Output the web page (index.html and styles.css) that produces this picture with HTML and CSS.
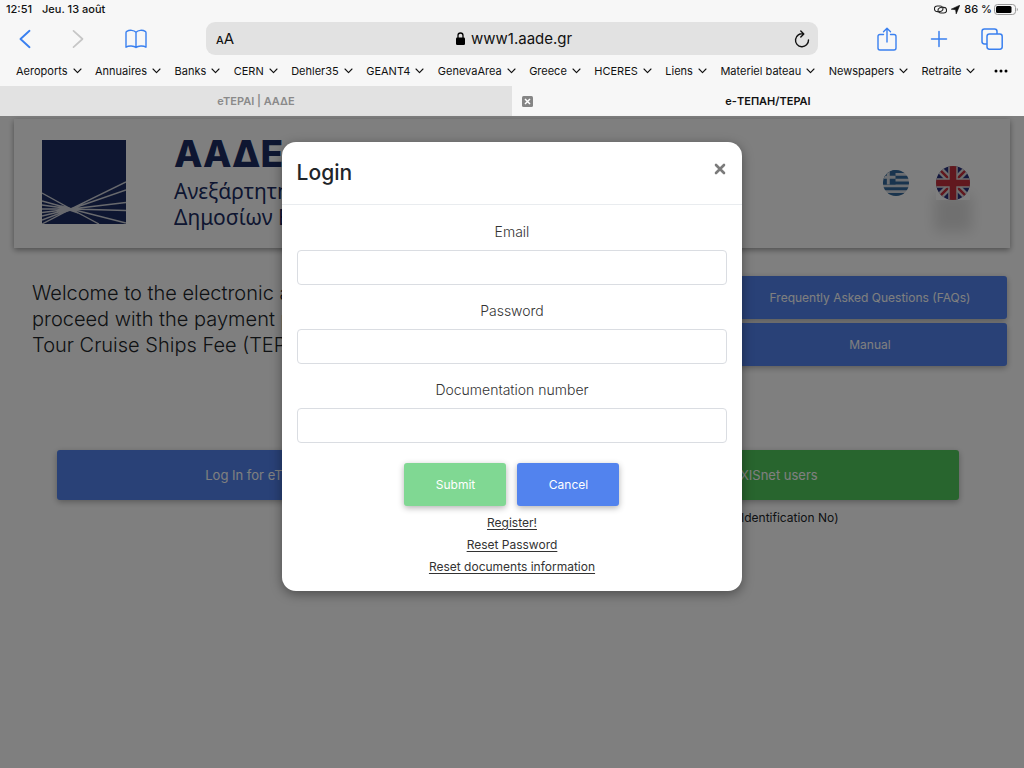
FILE: index.html
```html
<!DOCTYPE html>
<html lang="en">
<head>
<meta charset="utf-8">
<meta name="viewport" content="width=device-width, initial-scale=1">
<title>e-ΤΕΠΑΗ/TEPAI</title>
<link rel="stylesheet" href="styles.css">
</head>
<body>
<svg class="sprite" aria-hidden="true">
  <symbol id="chev" viewBox="0 0 9 6"><path d="M1 1 4.500 4.600 8 1" fill="none" stroke="currentColor" stroke-width="1.100" stroke-linecap="round" stroke-linejoin="round"/></symbol>
</svg>
<header class="browser">
  <div class="status">
    <span>12:51</span><span class="date">Jeu. 13 août</span>
    <span class="status-right">
      <svg width="13" height="9" viewBox="0 0 13 9" fill="none" stroke="#222" stroke-width="1.100" stroke-linecap="round"><path d="M4 6.600H3.200a2.700 2.700 0 0 1 0-5.600h3a2.700 2.700 0 0 1 1.600 4.900Q7 6.600 5.600 6.400M9 2.400h.8a2.700 2.700 0 0 1 0 5.600h-3a2.700 2.700 0 0 1-1.600-4.900Q6 2.400 7.400 2.600"/></svg>
      <svg width="9" height="9" viewBox="0 0 9 9"><path d="M8.800.2 5.200 8.900 4.600 4.700.2 4.200z" fill="#111" stroke="#111" stroke-width=".6" stroke-linejoin="round"/></svg>
      <span>86 %</span>
      <svg width="24" height="11" viewBox="0 0 24 11"><rect x=".5" y=".5" width="21" height="10" rx="3" fill="none" stroke="#999"/><rect x="2" y="2" width="15.500" height="7" rx="1.500" fill="#000"/><path d="M22.800 3.800q1 .4 1 1.700t-1 1.700z" fill="#999"/></svg>
    </span>
  </div>
  <div class="toolbar">
    <div class="tools tools-left">
      <button aria-label="Back"><svg width="12" height="20" viewBox="0 0 12 20" fill="none" stroke="#3a80f0" stroke-width="1.900" stroke-linecap="round" stroke-linejoin="round"><path d="M10.500 1.800 1.500 10l9 8.200"/></svg></button>
      <button aria-label="Forward"><svg width="12" height="20" viewBox="0 0 12 20" fill="none" stroke="#c6c6c6" stroke-width="1.700" stroke-linecap="round" stroke-linejoin="round"><path d="m1.500 1.800 9 8.200-9 8.200"/></svg></button>
      <button aria-label="Bookmarks"><svg width="22" height="20" viewBox="0 0 22 20" fill="none" stroke="#3a80f0" stroke-width="1.400" stroke-linejoin="round"><path d="M11 3.200C9 1 4.500.7 1.800 2.300q-.8.500-.8 1.400v14.500c2.500-1.800 8-1.600 10 .4 2-2 7.500-2.200 10-.4V3.700q0-.9-.8-1.400C17.500.7 13 1 11 3.200zv15.400M11 3.200v15.400"/></svg></button>
    </div>
    <div class="address">
      <button class="reader" aria-label="Text size"><span class="small-a">A</span>A</button>
      <div class="url"><svg width="9" height="13" viewBox="0 0 9 13"><rect y="5.500" width="9" height="7.500" rx="1.200"/><path d="M2 6V3.500a2.500 2.500 0 0 1 5 0V6" fill="none" stroke="#000" stroke-width="1.300"/></svg><span>www1.aade.gr</span></div>
      <button aria-label="Reload"><svg width="16" height="18" viewBox="0 0 16 18" fill="none" stroke="#111" stroke-width="1.400" stroke-linecap="round" stroke-linejoin="round"><path d="M9.500 3.900A6.500 6.500 0 1 0 14.500 10M6.800 1l3 3-3 3"/></svg></button>
    </div>
    <div class="tools tools-right">
      <button aria-label="Share"><svg width="20" height="24" viewBox="0 0 20 24" fill="none" stroke="#3a80f0" stroke-width="1.400" stroke-linecap="round" stroke-linejoin="round"><path d="M6.500 7.500H3q-2 0-2 2V21q0 2 2 2h14q2 0 2-2V9.500q0-2-2-2h-3.500M10 15V1.500M6.500 4.800 10 1.300l3.500 3.500"/></svg></button>
      <button aria-label="New tab"><svg width="18" height="18" viewBox="0 0 18 18" stroke="#3a80f0" stroke-width="1.500" stroke-linecap="round"><path d="M9 1.500v15M1.500 9h15"/></svg></button>
      <button aria-label="Tabs"><svg width="22" height="22" viewBox="0 0 22 22" fill="none" stroke="#3a80f0" stroke-width="1.500"><rect x="6" y="6" width="15.200" height="15.200" rx="2.400"/><path d="M6 16H3.400Q1 16 1 13.600V3.400Q1 1 3.400 1h10.200Q16 1 16 3.400V6"/></svg></button>
    </div>
  </div>
  <nav class="favorites" aria-label="Favorites">
    <button>Aeroports<svg><use href="#chev"/></svg></button>
    <button>Annuaires<svg><use href="#chev"/></svg></button>
    <button>Banks<svg><use href="#chev"/></svg></button>
    <button>CERN<svg><use href="#chev"/></svg></button>
    <button>Dehler35<svg><use href="#chev"/></svg></button>
    <button>GEANT4<svg><use href="#chev"/></svg></button>
    <button>GenevaArea<svg><use href="#chev"/></svg></button>
    <button>Greece<svg><use href="#chev"/></svg></button>
    <button>HCERES<svg><use href="#chev"/></svg></button>
    <button>Liens<svg><use href="#chev"/></svg></button>
    <button>Materiel bateau<svg><use href="#chev"/></svg></button>
    <button>Newspapers<svg><use href="#chev"/></svg></button>
    <button>Retraite<svg><use href="#chev"/></svg></button>
    <button class="more" aria-label="More"><svg viewBox="0 0 14 4"><circle cx="2" cy="2" r="1.500"/><circle cx="7" cy="2" r="1.500"/><circle cx="12" cy="2" r="1.500"/></svg></button>
  </nav>
  <div class="tabs">
    <div class="tab"><span>eTEPAI | ΑΑΔΕ</span></div>
    <div class="tab tab-active">
      <button class="tab-close" aria-label="Close tab"><svg width="11" height="11" viewBox="0 0 11 11"><rect width="11" height="11" rx="1.500" fill="#858585"/><path d="m3 3 5 5m0-5-5 5" stroke="#fff" stroke-width="1.500"/></svg></button>
      <span>e-ΤΕΠΑΗ/TEPAI</span>
    </div>
  </div>
</header>

<div class="page">
  <header class="site-header">
    <svg class="logo" viewBox="0 0 84 84" role="img" aria-label="ΑΑΔΕ"><rect width="84" height="84" fill="#1c2d62"/><path d="M0 53 29 69 84 42M29 69 84 50M29 69 84 62.500M29 69 84 70.500M29 69 84 83M29 69 57 84M29 69 0 84M29 69 0 61M29 69H0M29 69 0 76M29 69 0 65M29 69 0 72.500M29 69 0 80" fill="none" stroke="#d0d2da" stroke-width="1.400"/><path d="m18 65 11 3 9-2-6 4 5 4-9-3-10 3 7-5z" fill="#d0d2da"/></svg>
    <div class="brand">
      <strong>ΑΑΔΕ</strong>
      <span>Ανεξάρτητη<br>Δημοσίων Εσόδων</span>
    </div>
    <div class="languages">
      <button class="flag-gr" aria-label="Ελληνικά"><svg width="26" height="26" viewBox="0 0 27 27"><clipPath id="gr"><circle cx="13.500" cy="13.500" r="13.500"/></clipPath><g clip-path="url(#gr)"><path d="M0 0h27v27H0z" fill="#d8dde2"/><path d="M0 1.500h27M0 7.500h27M0 13.500h27M0 19.500h27M0 25.500h27" stroke="#33699c" stroke-width="3"/><path d="M0 0h13v15H0z" fill="#33699c"/><path d="M5.500 0v15M0 7.500h13" stroke="#d8dde2" stroke-width="3"/></g></svg></button>
      <button class="flag-uk" aria-label="English"><svg width="34" height="34" viewBox="0 0 34 34"><clipPath id="uk"><circle cx="17" cy="17" r="17"/></clipPath><g clip-path="url(#uk)"><path d="M0 0h34v34H0z" fill="#28307c"/><path d="m0 0 34 34M34 0 0 34" stroke="#ddd" stroke-width="7"/><path d="m0 0 34 34M34 0 0 34" stroke="#c2303c" stroke-width="2.600"/><path d="M17 0v34M0 17h34" stroke="#ddd" stroke-width="9.500"/><path d="M17 0v34M0 17h34" stroke="#c2303c" stroke-width="6.600"/></g></svg></button>
    </div>
  </header>

  <main>
    <section class="intro">
      <p class="welcome">Welcome to the electronic application to<br>proceed with the payment process of the<br>Tour Cruise Ships Fee (TEPAI)</p>
      <div class="help">
        <button class="btn">Frequently Asked Questions (FAQs)</button>
        <button class="btn">Manual</button>
      </div>
    </section>
    <section class="logins">
      <div><button class="btn btn-wide">Log In for eTEPAI users</button></div>
      <div>
        <button class="btn btn-wide btn-green">Log In for TAXISnet users</button>
        <p class="note">(Holders of Tax Identification No)</p>
      </div>
    </section>
  </main>

  <div class="overlay">
    <form class="dialog" role="dialog" aria-labelledby="login-title">
      <div class="dialog-head">
        <h1 id="login-title">Login</h1>
        <button type="button" class="close" aria-label="Close"><svg width="12" height="12" viewBox="0 0 12 12"><path d="m2 2 8 8m0-8-8 8" stroke="#7b7b7b" stroke-width="2.600" stroke-linecap="round"/></svg></button>
      </div>
      <div class="dialog-body">
        <div class="field"><label for="email">Email</label><input id="email" type="email"></div>
        <div class="field"><label for="password">Password</label><input id="password" type="password"></div>
        <div class="field"><label for="docnum">Documentation number</label><input id="docnum" type="text"></div>
        <div class="actions">
          <button type="submit" class="btn btn-submit">Submit</button>
          <button type="button" class="btn">Cancel</button>
        </div>
        <div class="links">
          <a href="#">Register!</a>
          <a href="#">Reset Password</a>
          <a href="#">Reset documents information</a>
        </div>
      </div>
    </form>
  </div>
</div>
</body>
</html>
```

FILE: styles.css
```css
* { box-sizing: border-box; }

body {
  margin: 0;
  min-height: 100vh;
  display: flex;
  flex-direction: column;
  background: #fff;
  color: #212529;
  font-family: Inter, "Open Sans", "Liberation Sans", sans-serif;
}

button {
  margin: 0;
  padding: 0;
  border: 0;
  background: none;
  color: inherit;
  font: inherit;
  cursor: pointer;
}

svg { display: block; }
.sprite { display: none; }
p, h1 { margin: 0; }

/* Browser */
.browser { background: #f7f7f7; color: #111; }

.status {
  display: flex;
  align-items: center;
  height: 18px;
  padding: 0 6px;
  font-size: 11px;
  font-weight: 500;
}
.date { margin-left: 10px; }
.status-right {
  display: flex;
  align-items: center;
  gap: 4px;
  margin-left: auto;
}
.status-right span { margin-right: -2px; }

.toolbar { display: flex; align-items: center; height: 41px; }
.tools { display: flex; align-items: center; width: 206px; }
.tools-left { padding-left: 19px; gap: 41px; }
.tools-right { padding-left: 59px; gap: 33px; }

.address {
  flex: 1;
  display: flex;
  align-items: center;
  justify-content: space-between;
  height: 33px;
  padding: 0 8px 0 10px;
  border-radius: 9px;
  background: #e2e2e2;
  font-size: 15px;
}
.small-a { font-size: 11px; font-weight: 500; }
.url { display: flex; align-items: center; gap: 6px; }

.favorites {
  display: flex;
  align-items: center;
  justify-content: space-between;
  height: 27px;
  padding: 0 16px 3px;
  font-size: 11px;
}
.favorites button { display: flex; align-items: center; gap: 5px; white-space: nowrap; }
.favorites svg { width: 9px; height: 6px; }
.favorites .more { margin-left: 5px; }
.favorites .more svg { width: 14px; height: 4px; }

.tabs { display: grid; grid-template-columns: 1fr 1fr; height: 30px; font-size: 11px; font-weight: 600; }
.tab {
  display: flex;
  align-items: center;
  justify-content: center;
  background: #e2e2e2;
  color: #8a8a8a;
}
.tab-active { position: relative; background: #f7f7f7; color: #111; }
.tab-close { position: absolute; left: 10px; }

/* Site */
.page { position: relative; flex: 1; padding: 3px 14px 0; }

.site-header {
  display: flex;
  align-items: flex-start;
  padding: 21px 40px 18px 28px;
  background: #fff;
  box-shadow: 0 2px 6px rgba(0, 0, 0, .4);
}
.logo { width: 84px; height: 84px; }
.brand { display: flex; flex-direction: column; margin-left: 48px; color: #1c2d62; white-space: nowrap; }
.brand strong { font-size: 37px; line-height: 28px; font-weight: 800; }
.brand span { margin-top: 10px; font-family: "Noto Sans", sans-serif; font-size: 21px; line-height: 26px; }
.languages { display: flex; align-items: center; gap: 27px; margin: 26px 0 0 auto; }
.flag-uk { box-shadow: 0 30px 14px 2px rgba(0, 0, 0, .12); }

.intro { display: grid; grid-template-columns: 1fr 274px; padding: 28px 3px 0 18px; }
.welcome { padding-top: 4px; font-size: 20px; line-height: 26px; font-weight: 300; }
.help { display: grid; gap: 4px; }

.btn {
  height: 43px;
  border-radius: 3px;
  background: #5283ee;
  box-shadow: 0 2px 6px rgba(0, 0, 0, .3);
  color: #fff;
  font-size: 12px;
}
.btn-wide { width: 100%; height: 50px; font-size: 13px; }
.btn-green { background: #51cb5d; }

.logins {
  display: grid;
  grid-template-columns: 1fr 1fr;
  gap: 24px;
  padding: 84px 51px 0 43px;
  text-align: center;
}
.note { padding: 9px 0 0 10px; font-size: 12px; line-height: 18px; }

/* Login dialog */
.overlay {
  position: absolute;
  inset: 0;
  padding-top: 26px;
  background: rgba(0, 0, 0, .5);
}
.dialog {
  width: 45%;
  margin: 0 auto;
  border-radius: 14px;
  background: #fff;
  box-shadow: 0 3px 12px rgba(0, 0, 0, .4);
}
.dialog-head {
  display: flex;
  justify-content: space-between;
  padding: 15px 16px 15px 15px;
  border-bottom: 1px solid #e9ecef;
}
.dialog-head h1 { font-size: 21px; line-height: 32px; font-weight: 500; }
.close { height: 24px; }
.dialog-body { padding: 16px 15px 13px; }
.field { display: grid; margin-bottom: 15px; text-align: center; }
.field label { color: #333; font-size: 14px; line-height: 22px; font-weight: 300; margin-bottom: 7px; }
.field input {
  width: 100%;
  height: 35px;
  padding: 0 10px;
  border: 1px solid #dadde2;
  border-radius: 4px;
  background: #fff;
  font: inherit;
}
.actions { display: flex; justify-content: center; gap: 11px; padding-top: 5px; }
.actions .btn { width: 102px; }
.actions .btn-submit { background: #80d893; }
.links { display: grid; justify-items: center; padding-top: 6px; font-size: 12px; line-height: 22px; }
.links a { color: #333; text-underline-offset: 2px; }
```
